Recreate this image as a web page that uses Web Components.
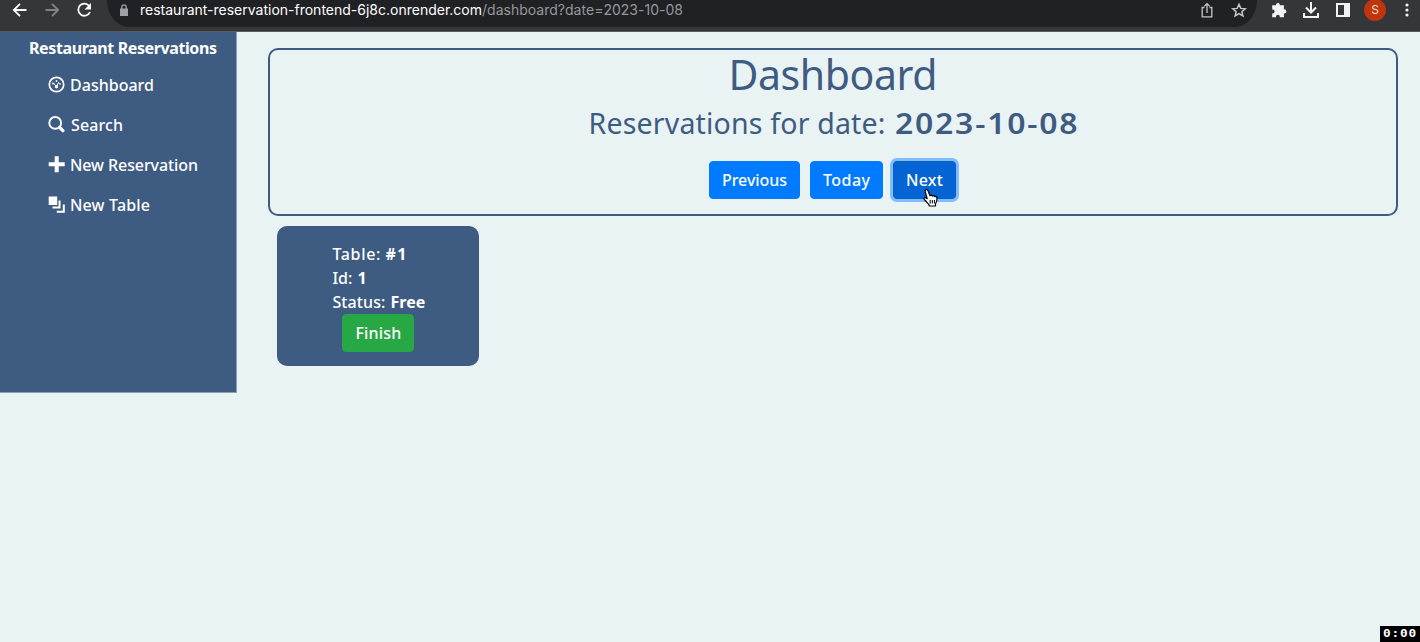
<!DOCTYPE html>
<html lang="en">
<head>
<meta charset="utf-8">
<title>Restaurant Reservations</title>
<style>
html,body{margin:0;height:100%;overflow:hidden;background:#e9f3f4}
body{font-family:"Noto Sans","Open Sans",sans-serif;font-size:16px;line-height:24px;font-weight:500}
</style>
</head>
<body>
<app-window></app-window>
<script>
function define(name, html, init) {
  const t = document.createElement('template');
  t.innerHTML = html;
  customElements.define(name, class extends HTMLElement {
    connectedCallback() {
      if (this.shadowRoot) return;
      this.attachShadow({mode: 'open'}).append(t.content.cloneNode(true));
      if (init) init(this);
    }
  });
}

// A single run of text tracked so that it spans the width given in "w".
define('tracked-text', `<style>:host{display:inline-block;vertical-align:top;white-space:pre;text-align:left}</style><slot></slot>`, el => {
  const w = parseFloat(el.getAttribute('w'));
  const n = el.textContent.length;
  const natural = parseFloat(getComputedStyle(el).width);
  el.style.letterSpacing = ((w - natural) / Math.max(1, n - 1)) + 'px';
  el.style.width = w + 'px';
});

define('browser-bar', `<style>
:host{display:flex;height:32px;box-sizing:border-box;background:#35363a;border-bottom:1px solid #5b5c5f;color:#fff;font:400 14px/20px Inter,sans-serif;overflow:hidden}
svg{display:block;flex:none}
.nav{width:107px;flex:none}
.url{display:flex;flex:none;width:1150px;height:27px;background:#202124;border-radius:0 0 22px 22px/0 0 27px 27px}
.lock{margin:4px 9px 0 12px}
.path{color:#96999c}
.end{margin-left:auto}
tracked-text{height:20px}
</style>
<svg class="nav" width="107" height="30" fill="none" stroke="#fff" stroke-width="1.8"><path d="M26.5 10H14M20 3.8 13.8 10l6.2 6.2"/><path stroke="#828386" d="M45.5 10H58M52 3.8 58.2 10 52 16.2"/><path d="M89.4 6.2A6.1 6.1 0 1 0 90 12"/><path fill="#fff" stroke="none" d="M91 3v6.5h-6.5z"/></svg>
<div class="url">
<svg class="lock" width="12" height="14"><path fill="#9aa0a6" d="M1 4.5h8V12H1z"/><path d="M2.800 5V3a2.200 2.200 0 0 1 4.400 0v2" fill="none" stroke="#9aa0a6" stroke-width="1.3"/></svg>
<tracked-text w="342">restaurant-reservation-frontend-6j8c.onrender.com</tracked-text><tracked-text class="path" w="201">/dashboard?date=2023-10-08</tracked-text>
<svg class="end" width="57" height="27" fill="none" stroke="#c4c6c9" stroke-width="1.3"><path d="M4.5 7.5H2.2v9.3h9.6V7.5H9.5M7 13V3.8M4.4 6.2 7 3.6l2.6 2.6"/><path stroke-width="1.5" d="m39 4.4 1.8 4 4.4.4-3.3 2.9 1 4.3-3.9-2.3-3.9 2.3 1-4.3-3.3-2.9 4.4-.4z"/></svg>
</div>
<svg width="163" height="30"><path transform="translate(1.500 0)" fill="#f1f3f4" d="M19.4 3a2 2 0 0 1 2 2v.3h4v4h.4a2.1 2.1 0 0 1 0 4.2h-.4v3.7h-4.1v-.5a1.9 1.9 0 0 0-3.8 0v.5h-3.8v-3.8h.5a1.9 1.9 0 0 0 0-3.8h-.5V5.300h3.700V5a2 2 0 0 1 2-2z"/><g fill="none" stroke="#f1f3f4" stroke-width="2"><path d="M54 2v10M49 7.500l5 5 5-5M47 13v4h14v-4"/><path d="M80 4h12v12H80z"/></g><path fill="#f1f3f4" d="M87 3h6v14h-6z"/><circle cx="118" cy="10" r="11" fill="#bf360c"/><text x="118" y="14.300" text-anchor="middle" font-family="Inter" font-size="12" fill="#f5dfd8">S</text><g fill="#f1f3f4"><circle cx="150" cy="5" r="1.600"/><circle cx="150" cy="10" r="1.600"/><circle cx="150" cy="15" r="1.600"/></g></svg>`);

define('nav-item', `<style>
:host{display:flex;height:40px;box-sizing:border-box;padding:8px 0 8px 48px;color:#fff}
svg{display:block;margin-top:3px;width:17px;height:17px;flex:none}
slot{display:block;margin-left:5px}
</style><svg viewBox="0 0 17 17"></svg><slot></slot>`, el => {
  const icons = {
    dash: '<circle cx="8.500" cy="8.500" r="7.200" fill="none" stroke="#fff" stroke-width="1.700"/><g fill="#fff"><circle cx="5" cy="7.500" r=".9"/><circle cx="8.500" cy="5" r=".9"/><circle cx="12" cy="7.800" r=".9"/><circle cx="8.500" cy="10.700" r="1.700"/></g><path d="M5.300 6.800 8.500 10.700 10.700 6.200" fill="none" stroke="#fff" stroke-width="1"/>',
    search: '<circle cx="7.200" cy="6.900" r="5.900" fill="none" stroke="#fff" stroke-width="1.900"/><path d="m11.600 11.500 3.300 3.200" stroke="#fff" stroke-width="3.200" stroke-linecap="round"/>',
    plus: '<path fill="#fff" d="M6.700.300h4v6h6v4h-6v6h-4v-6h-6v-4h6z"/>',
    layers: '<path fill="#fff" d="M.700.500h8.500V9H.700zM10.500 4.500h2v8h-8v-2h6zM14.800 8.500h2v8.200h-8v-2h6z"/>'
  };
  el.shadowRoot.querySelector('svg').innerHTML = icons[el.getAttribute('icon')];
});

define('side-bar', `<style>
:host{display:block;box-sizing:border-box;width:237px;height:361px;background:#3e5b81;border-right:1px solid #8da1b6;border-bottom:1px solid #8da1b6;padding-top:4px;color:#fff}
.brand{padding-left:29px;height:29px;font-weight:700}
.s{margin-left:1px}
</style>
<div class="brand"><tracked-text w="188">Restaurant Reservations</tracked-text></div>
<nav><nav-item icon="dash"><tracked-text w="84">Dashboard</tracked-text></nav-item>
<nav-item icon="search"><tracked-text class="s" w="52">Search</tracked-text></nav-item>
<nav-item icon="plus"><tracked-text w="128">New Reservation</tracked-text></nav-item>
<nav-item icon="layers"><tracked-text w="80">New Table</tracked-text></nav-item></nav>`);

define('action-button', `<style>
:host{display:block}
button{display:block;box-sizing:border-box;height:38px;padding:6px 12px;border:1px solid #007bff;border-radius:4px;background:#007bff;color:#fff;font:inherit;line-height:24px}
:host([kind=active]) button{background:#0564d3;border-color:#0460c6;box-shadow:0 0 0 3px #80bdff}
:host([kind=success]) button{background:#28a745;border-color:#28a745}
</style><button><slot></slot></button>`);

define('date-panel', `<style>
:host{display:flex;flex-direction:column;align-items:center;box-sizing:border-box;width:1130px;height:168px;margin-left:1px;border:2px solid #3e5b81;border-radius:10px;color:#3e5b81}
h1{margin:0;padding-top:1px;font-weight:400;font-size:41px;line-height:46px}
h2{margin:6px 0 17.500px;font-weight:400;font-size:28.500px;line-height:40px;display:flex;gap:9px}
b{display:block;width:183px;font-weight:600}
b span{display:block;transform:scaleX(1.12);transform-origin:0 0}
.row{display:flex;gap:10px;margin-left:-1px}
</style>
<h1><tracked-text w="209">Dashboard</tracked-text></h1>
<h2><tracked-text w="297">Reservations for date:</tracked-text><b><span><tracked-text w="163">2023-10-08</tracked-text></span></b></h2>
<div class="row"><action-button><tracked-text w="65">Previous</tracked-text></action-button><action-button><tracked-text w="47">Today</tracked-text></action-button><action-button kind="active"><tracked-text w="37">Next</tracked-text></action-button></div>`);

define('table-card', `<style>
:host{display:flex;flex-direction:column;align-items:center;box-sizing:border-box;width:202px;height:140px;margin:10px 0 0 10.400px;padding-top:16px;background:#3e5b81;border-radius:10px;color:#fff}
.info{width:94px;margin-right:-2px}
.info div{display:flex;gap:5px;height:24px}
b{font-weight:700}
action-button{margin-top:-.4px}
</style>
<div class="info"><div><tracked-text w="48">Table:</tracked-text><b><tracked-text w="21">#1</tracked-text></b></div>
<div><tracked-text w="20">Id:</tracked-text><b><tracked-text w="10">1</tracked-text></b></div>
<div><tracked-text w="53">Status:</tracked-text><b><tracked-text w="35">Free</tracked-text></b></div></div>
<action-button kind="success"><tracked-text w="46">Finish</tracked-text></action-button>`);

define('hand-cursor', `<style>:host{position:absolute;left:922px;top:188px;z-index:2}svg{display:block}</style>
<svg width="18" height="20" viewBox="0 0 18 20"><path d="M5.200 10.700 3.300 4C2.600 1.300 5.100.700 6 2.800L8 7.800c.6-1 2-.8 2.500.300.7-.8 2-.5 2.300.500 1-.5 2.200.1 2.200 1.400 0 3-.4 4.200-1.500 6v2H7.200l-.3-1.500C5.500 15 4.500 13.800 2.300 11.500 1.400 10 2.700 8.800 5.200 10.700z" fill="#fff" stroke="#000" stroke-width="1.200" stroke-linejoin="round"/><path d="M8.200 12v3.500M10.300 12v3.500M12.400 12v3.500" stroke="#000"/></svg>`);

define('clock-badge', `<style>:host{position:absolute;right:0;bottom:0;width:40px;height:16px;box-sizing:border-box;padding-left:3px;background:#000;color:#fff;font:700 10px/15px "DejaVu Sans Mono",monospace}span{display:block;transform:scaleX(1.28);transform-origin:0 0}</style><span><tracked-text w="26">0:00</tracked-text></span>`);

define('app-window', `<style>
:host{display:block;height:642px;position:relative;overflow:hidden;background:#e9f3f4}
.page{display:flex}
main{margin:16px 0 0 30px}
</style>
<browser-bar></browser-bar>
<div class="page"><side-bar></side-bar><main><date-panel></date-panel><table-card></table-card></main></div>
<hand-cursor></hand-cursor><clock-badge></clock-badge>`);
</script>
</body>
</html>
